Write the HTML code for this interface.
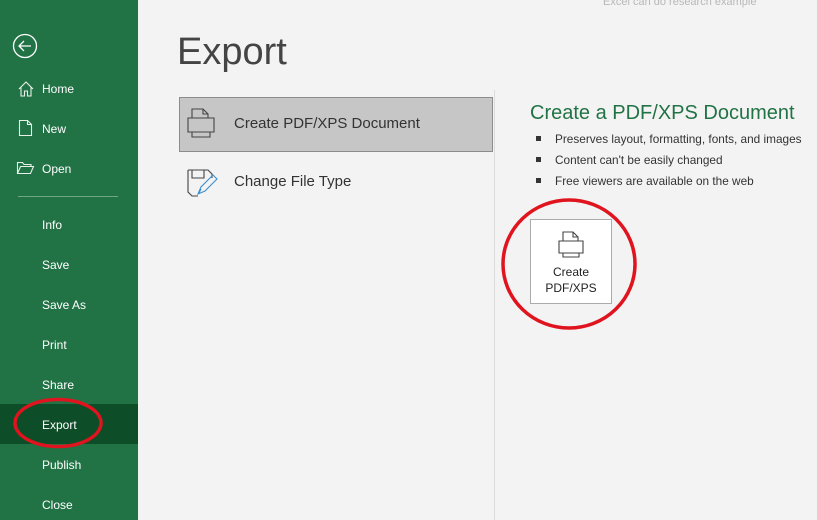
<!DOCTYPE html>
<html><head><meta charset="utf-8"><style>
body{margin:0;width:817px;height:520px;overflow:hidden;background:#f3f3f3;font-family:"Liberation Sans",sans-serif;position:relative}
.sb{position:absolute;left:0;top:0;width:138px;height:520px;background:#217346}
.it{position:absolute;left:42px;color:#fff;font-size:12px;line-height:16px}
.ab{position:absolute}
</style></head><body>
<div class="sb">
<svg class="ab" style="left:11px;top:32px" width="28" height="28" viewBox="0 0 28 28" fill="none" stroke="#fff" stroke-width="1.3"><circle cx="14" cy="14" r="11.5"/><path d="M8 14h12M13 9l-5 5 5 5"/></svg>
<svg class="ab" style="left:17px;top:80px" width="18" height="18" viewBox="0 0 18 18" fill="none" stroke="#e8f0ea" stroke-width="1.1"><path d="M2 9L9 2l7 7M4 7.5V16h3.5v-5h3v5H14V7.5"/></svg>
<svg class="ab" style="left:18px;top:119px" width="16" height="18" viewBox="0 0 16 18" fill="none" stroke="#e8f0ea" stroke-width="1.1"><path d="M1.5 1.5h8l4 4v11h-12zM9.5 1.5v4h4"/></svg>
<svg class="ab" style="left:16px;top:160px" width="20" height="16" viewBox="0 0 20 16" fill="none" stroke="#e8f0ea" stroke-width="1.1"><path d="M1.5 13.5V2.5h5l1.5 2h7v2M1.5 13.5l3-7h13l-3 7z"/></svg>
<div class="it" style="top:81px">Home</div>
<div class="it" style="top:121px">New</div>
<div class="it" style="top:161px">Open</div>
<div class="ab" style="left:18px;top:196px;width:100px;height:1px;background:#6fa585"></div>
<div class="it" style="top:217px">Info</div>
<div class="it" style="top:257px">Save</div>
<div class="it" style="top:297px">Save As</div>
<div class="it" style="top:337px">Print</div>
<div class="it" style="top:377px">Share</div>
<div class="ab" style="left:0;top:404px;width:138px;height:40px;background:#0d4d27"></div>
<div class="it" style="top:417px">Export</div>
<div class="it" style="top:457px">Publish</div>
<div class="it" style="top:497px">Close</div>
</div>
<svg class="ab" style="left:12px;top:396px" width="92" height="54"><ellipse cx="46" cy="27" rx="43" ry="23.5" fill="none" stroke="#e0141e" stroke-width="3.5"/></svg>
<div class="ab" style="left:603px;top:-4px;color:#b8b8b8;font-size:11px">Excel can do research example</div>
<div class="ab" style="left:177px;top:31px;font-size:38px;color:#444;font-weight:300">Export</div>
<div class="ab" style="left:494px;top:90px;width:1px;height:430px;background:#dcdcdc"></div>
<div class="ab" style="left:179px;top:97px;width:312px;height:53px;background:#c6c6c6;border:1px solid #8c8c8c"></div>
<svg class="ab" style="left:186px;top:107px" width="30" height="32" viewBox="0 0 30 32" fill="none" stroke="#444" stroke-width="1.1"><path d="M6 11V2h11l5 5v4M17 2v5h5M2 11h26v14H2zM6 25v5h18v-5"/></svg>
<div class="ab" style="left:234px;top:115px;font-size:15px;color:#333">Create PDF/XPS Document</div>
<svg class="ab" style="left:186px;top:166px" width="32" height="32" viewBox="0 0 32 32" fill="none" stroke-width="1.1"><path d="M2 4V26l4 4h6M2 4h20l4 4v4M6 4v8h12V4" stroke="#444"/><path d="M12 28l3-7 12-12 4 4-12 12z M13 27l2-4" stroke="#3a8fd0"/></svg>
<div class="ab" style="left:234px;top:173px;font-size:15px;color:#333">Change File Type</div>
<div class="ab" style="left:530px;top:102px;font-size:20px;color:#217346">Create a PDF/XPS Document</div>
<div class="ab" style="left:536px;top:129px;font-size:11.8px;color:#333;line-height:21px">
<div><span style="display:inline-block;width:5px;height:5px;background:#333;margin-right:14px;vertical-align:2px"></span>Preserves layout, formatting, fonts, and images</div>
<div><span style="display:inline-block;width:5px;height:5px;background:#333;margin-right:14px;vertical-align:2px"></span>Content can't be easily changed</div>
<div><span style="display:inline-block;width:5px;height:5px;background:#333;margin-right:14px;vertical-align:2px"></span>Free viewers are available on the web</div>
</div>
<div class="ab" style="left:530px;top:219px;width:80px;height:83px;background:#fff;border:1px solid #ababab"></div>
<svg class="ab" style="left:556px;top:230px" width="30" height="32" viewBox="0 0 30 32" fill="none" stroke="#444" stroke-width="1.1"><path d="M7 11V2h10l5 5v4M17 2v5h5M3 11h24v12H3zM7 23v4h16v-4"/></svg>
<div class="ab" style="left:530px;top:264px;width:82px;text-align:center;font-size:12px;color:#222;line-height:16px">Create<br>PDF/XPS</div>
<svg class="ab" style="left:500px;top:196px" width="140" height="136"><ellipse cx="69" cy="68" rx="66" ry="64" fill="none" stroke="#e0141e" stroke-width="3.5"/></svg>
</body></html>
